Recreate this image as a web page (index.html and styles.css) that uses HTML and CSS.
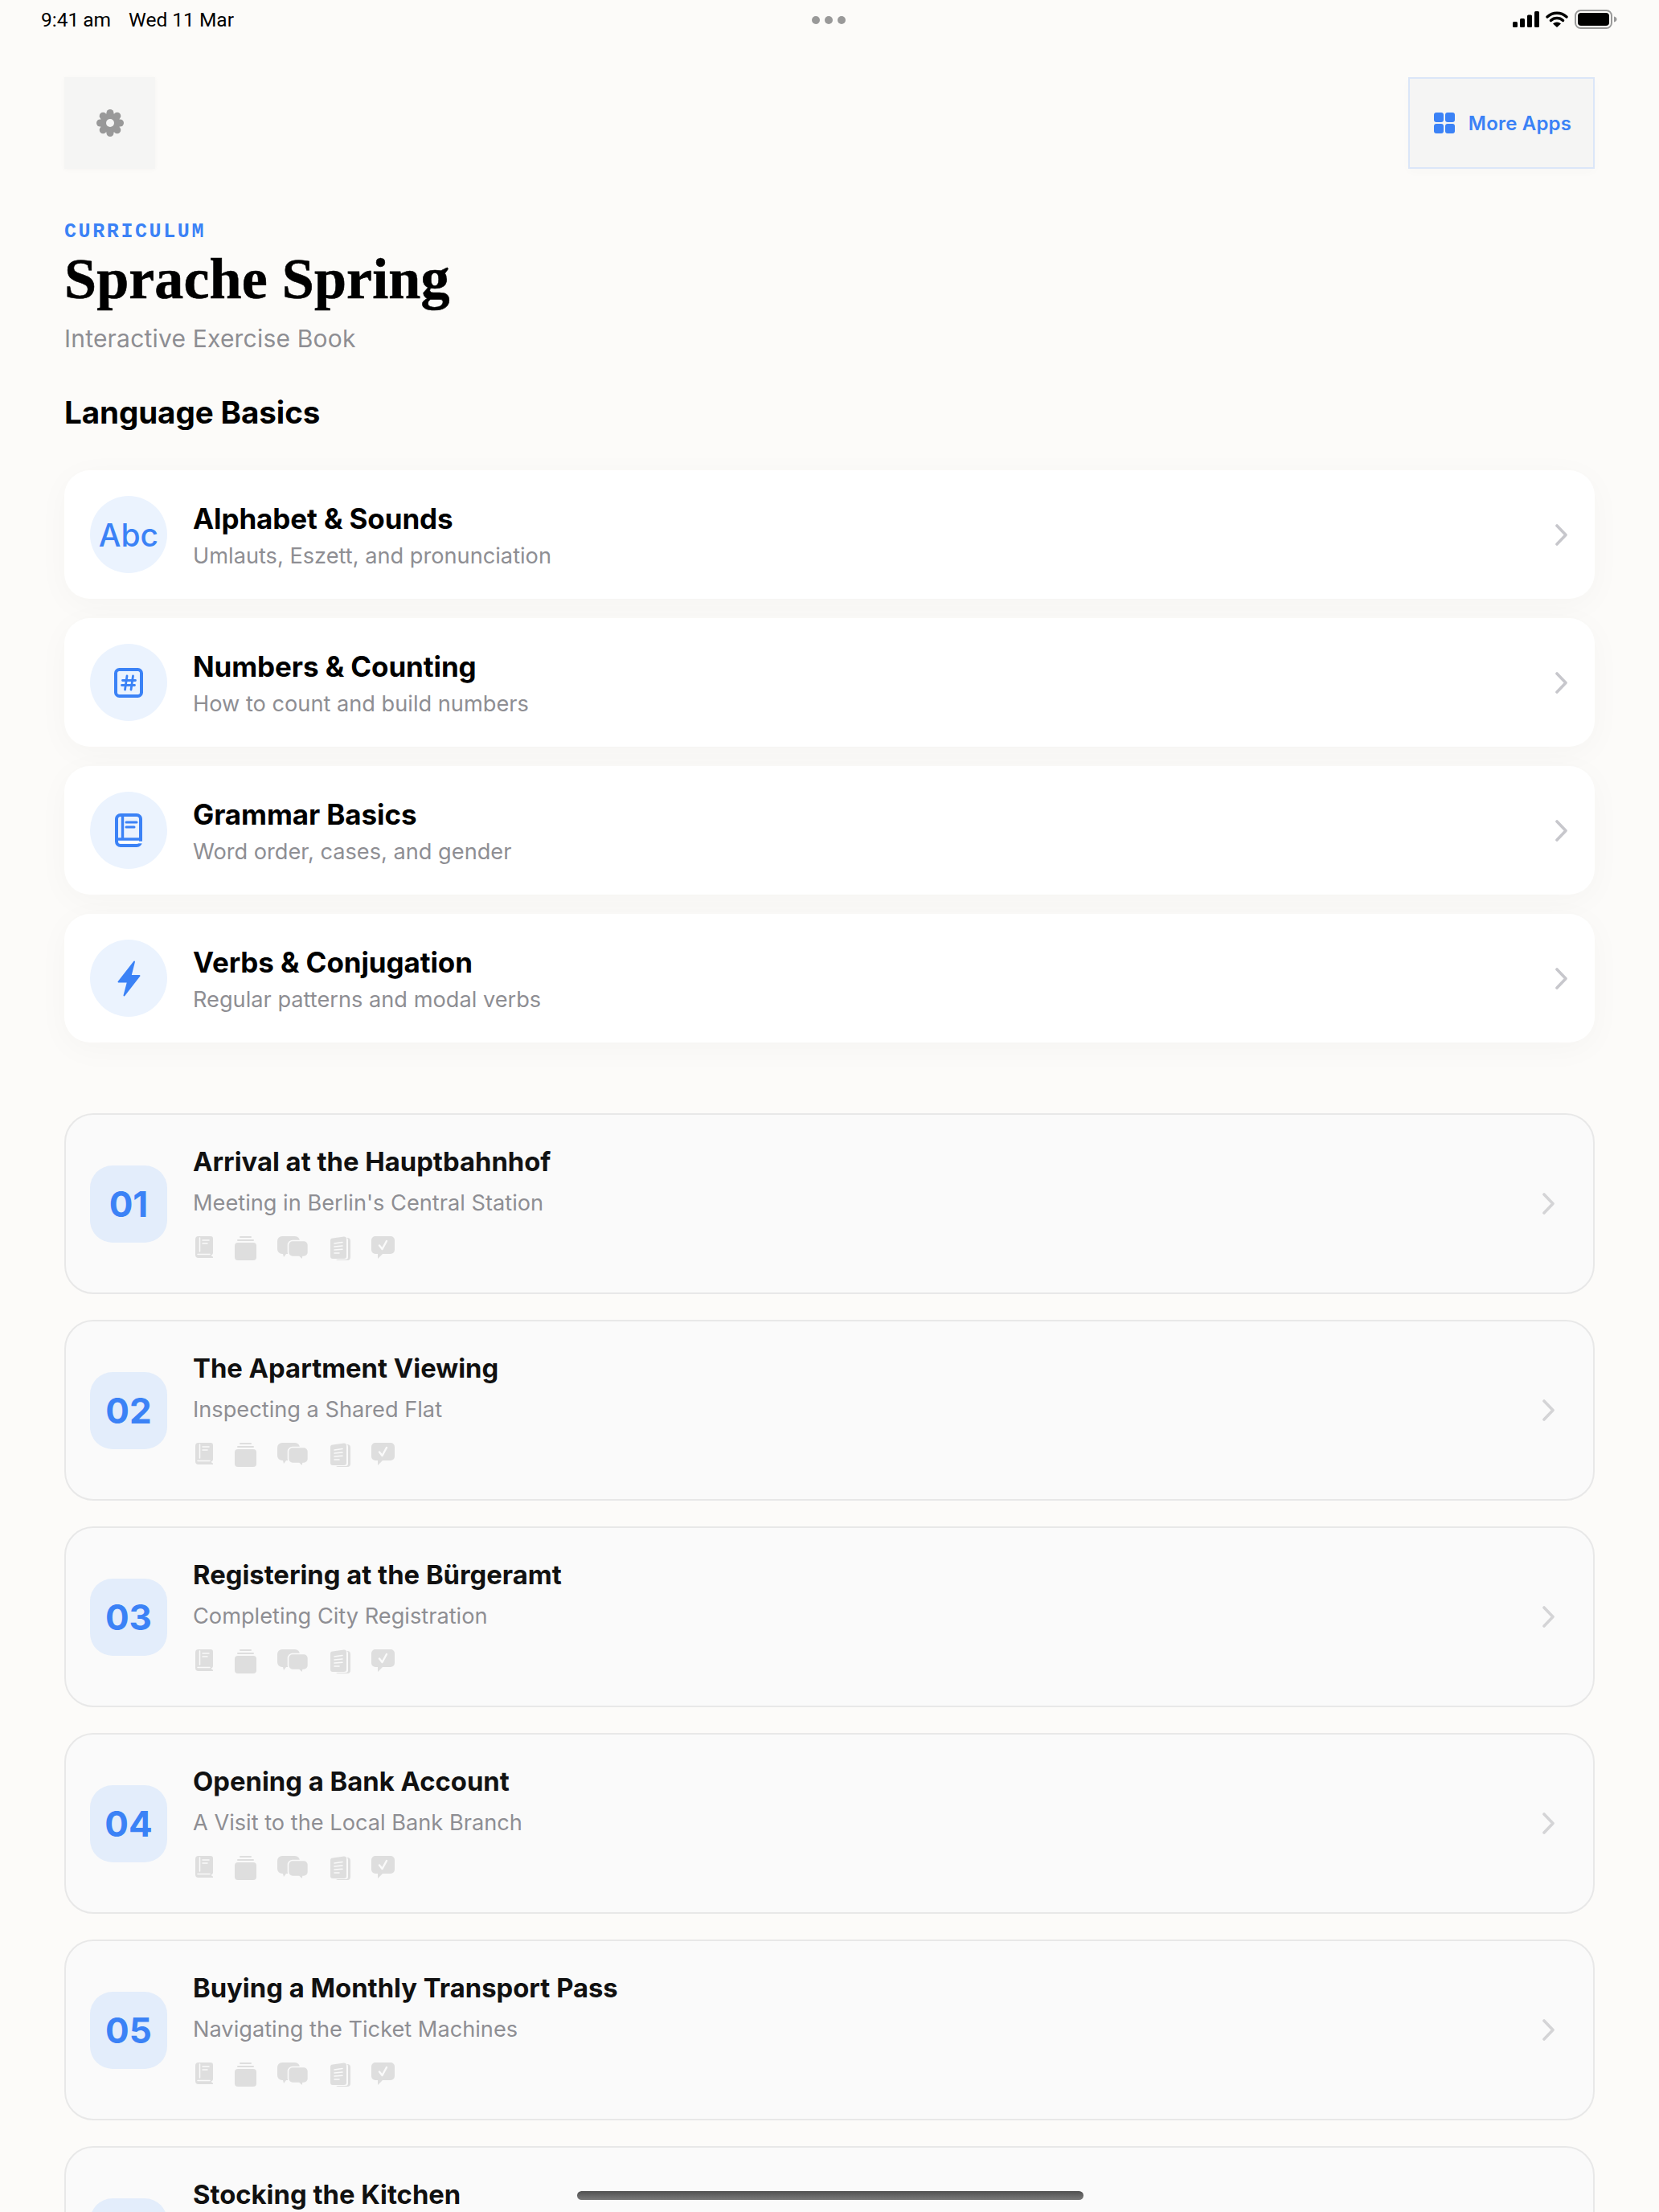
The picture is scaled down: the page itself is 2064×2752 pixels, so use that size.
FILE: index.html
```html
<!DOCTYPE html>
<html lang="en">
  <head>
    <meta charset="UTF-8" />
    <meta name="viewport" content="width=device-width, initial-scale=1.0" />
    <title>Sprache Spring</title>
    <link rel="stylesheet" href="styles.css">
  </head>
  <body>
    <svg class="sprites" aria-hidden="true">
      <symbol id="chevron" viewBox="0 0 15 27">
        <path d="M2 2l11 11.5L2 25" fill="none" stroke="currentColor" stroke-width="3.6" stroke-linecap="round" stroke-linejoin="round" />
      </symbol>
      <symbol id="mini-book" viewBox="0 0 22 27">
        <path d="M4 0h15a3 3 0 0 1 3 3v18a3 3 0 0 1-2 2.4c0 .8.6 1.6 2 2.1V27H4a4 4 0 0 1-4-4V4a4 4 0 0 1 4-4z" fill="currentColor" />
        <path d="M5.5 2v17M9 5h8M9 9h6M3 22.5h15" fill="none" stroke="#fafafa" stroke-width="1.5" stroke-linecap="round" />
      </symbol>
      <symbol id="mini-stack" viewBox="0 0 27 30">
        <rect x="0" y="8" width="27" height="22" rx="4" fill="currentColor" />
        <rect x="3" y="4" width="21" height="2" rx="1" fill="currentColor" />
        <rect x="6" y="0" width="15" height="2" rx="1" fill="currentColor" />
      </symbol>
      <symbol id="mini-chat" viewBox="0 0 39 30">
        <path d="M6 0h16a6 6 0 0 1 6 6v10a6 6 0 0 1-6 6H11l-3 4-1-4H6a6 6 0 0 1-6-6V6a6 6 0 0 1 6-6z" fill="currentColor" />
        <path d="M19 5.500h14a5.500 5.500 0 0 1 5.500 5.500v9a5.500 5.500 0 0 1-5.500 5.500h-1l-1 4-4-4h-8a5.500 5.500 0 0 1-5.500-5.500v-9a5.500 5.500 0 0 1 5.500-5.500z" fill="currentColor" stroke="#fafafa" stroke-width="1.600" />
      </symbol>
      <symbol id="mini-doc" viewBox="0 0 25 30">
        <path d="M19 2h2a4 4 0 0 1 4 4v20a4 4 0 0 1-4 4H9l-2-1h12a3 3 0 0 0 3-3V5a3 3 0 0 0-3-3z" fill="currentColor" />
        <path d="M3 2.500L17 .5a3 3 0 0 1 3 3V25a3 3 0 0 1-3 3H3a3 3 0 0 1-3-3V5.500a3 3 0 0 1 3-3z" fill="currentColor" />
        <path d="M5 9l10-1.500M5 13l10-1M5 17l10-.7M5 21h6" fill="none" stroke="#fafafa" stroke-width="1.500" stroke-linecap="round" />
      </symbol>
      <symbol id="mini-check" viewBox="0 0 29 28">
        <path d="M5 0h19a5 5 0 0 1 5 5v12a5 5 0 0 1-5 5H14l-6 6v-6H5a5 5 0 0 1-5-5V5a5 5 0 0 1 5-5z" fill="currentColor" />
        <path d="M10 11.500l3.500 4.500 5.500-10" fill="none" stroke="#fafafa" stroke-width="2.400" stroke-linecap="round" stroke-linejoin="round" />
      </symbol>
    </svg>

    <div class="status-bar">
      <div class="status-time">
        <span>9:41&thinsp;am</span>
        <span>Wed 11 Mar</span>
      </div>
      <div class="status-dots"><i></i><i></i><i></i></div>
      <div class="status-icons">
        <svg class="signal" viewBox="0 0 33 20">
          <rect x="0" y="13" width="6" height="7" rx="1.500" />
          <rect x="9" y="9" width="6" height="11" rx="1.500" />
          <rect x="18" y="4.500" width="6" height="15.500" rx="1.500" />
          <rect x="27" y="0" width="6" height="20" rx="1.500" />
        </svg>
        <svg class="wifi" viewBox="0 0 28 20">
          <path d="M2 7a17.500 17.500 0 0 1 24 0M6.500 11.500a11 11 0 0 1 15 0" fill="none" stroke="#000" stroke-width="3.400" stroke-linecap="round" />
          <path d="M14 20l-5-4.600a7.500 7.500 0 0 1 10 0z" />
        </svg>
        <svg class="battery" viewBox="0 0 53 24">
          <rect x="1" y="1" width="45" height="22" rx="6.500" fill="none" stroke="#999" stroke-width="2" />
          <rect x="4" y="4" width="39" height="16" rx="4" />
          <path d="M49 8.500c2 .4 3.500 1.700 3.500 3.500s-1.500 3.100-3.500 3.500z" fill="#999" />
        </svg>
      </div>
    </div>

    <main class="page">
      <div class="top-bar">
        <button class="settings-btn">
          <svg class="gear" viewBox="0 0 34 34">
            <g fill="#999">
              <circle cx="17" cy="17" r="12.500" />
              <circle cx="17" cy="4.500" r="4.500" />
              <circle cx="17" cy="29.500" r="4.500" />
              <circle cx="4.500" cy="17" r="4.500" />
              <circle cx="29.500" cy="17" r="4.500" />
              <circle cx="8.200" cy="8.200" r="4.500" />
              <circle cx="25.800" cy="8.200" r="4.500" />
              <circle cx="8.200" cy="25.800" r="4.500" />
              <circle cx="25.800" cy="25.800" r="4.500" />
            </g>
            <circle cx="17" cy="17" r="5" fill="#f5f5f4" />
          </svg>
        </button>
        <button class="apps-btn">
          <svg class="grid" viewBox="0 0 26 26">
            <rect x="0" y="0" width="12" height="12" rx="3" />
            <rect x="14" y="0" width="12" height="12" rx="3" />
            <rect x="0" y="14" width="12" height="12" rx="3" />
            <rect x="14" y="14" width="12" height="12" rx="3" />
          </svg>
          More Apps
        </button>
      </div>

      <header class="hero">
        <div class="eyebrow">CURRICULUM</div>
        <h1>Sprache Spring</h1>
        <p>Interactive Exercise Book</p>
      </header>

      <h2>Language Basics</h2>

      <section class="basics">
        <a class="basic-card">
          <span class="basic-icon abc">Abc</span>
          <span class="basic-text">
            <b>Alphabet &amp; Sounds</b>
            <small>Umlauts, Eszett, and pronunciation</small>
          </span>
          <svg class="chevron"><use href="#chevron" /></svg>
        </a>
        <a class="basic-card">
          <span class="basic-icon">
            <svg class="icon-hash" viewBox="0 0 36 37">
              <rect x="2" y="2" width="32" height="33" rx="4.500" fill="none" stroke="currentColor" stroke-width="4" />
              <path d="M16 10l-2.500 17M23.500 10L21 27M10.500 15.500h16M9.500 21.500h16" fill="none" stroke="currentColor" stroke-width="2.800" stroke-linecap="round" />
            </svg>
          </span>
          <span class="basic-text">
            <b>Numbers &amp; Counting</b>
            <small>How to count and build numbers</small>
          </span>
          <svg class="chevron"><use href="#chevron" /></svg>
        </a>
        <a class="basic-card">
          <span class="basic-icon">
            <svg class="icon-book" viewBox="0 0 34 42">
              <rect x="2" y="2" width="30" height="38" rx="5" fill="none" stroke="currentColor" stroke-width="4" />
              <path d="M9.500 3v29M3 32h28" fill="none" stroke="currentColor" stroke-width="3.400" />
              <path d="M14 11h13M14 17h10" fill="none" stroke="currentColor" stroke-width="3" stroke-linecap="round" />
              <path d="M6 36h28" fill="none" stroke="#fff" stroke-width="2.600" />
            </svg>
          </span>
          <span class="basic-text">
            <b>Grammar Basics</b>
            <small>Word order, cases, and gender</small>
          </span>
          <svg class="chevron"><use href="#chevron" /></svg>
        </a>
        <a class="basic-card">
          <span class="basic-icon">
            <svg class="icon-bolt" viewBox="0 0 29 45">
              <path d="M21 1.500L1.500 26.500H13l-4.500 17L27.500 19H16.500z" fill="currentColor" stroke="currentColor" stroke-width="2" stroke-linejoin="round" />
            </svg>
          </span>
          <span class="basic-text">
            <b>Verbs &amp; Conjugation</b>
            <small>Regular patterns and modal verbs</small>
          </span>
          <svg class="chevron"><use href="#chevron" /></svg>
        </a>
      </section>

      <section class="lessons">
        <a class="lesson-card">
          <span class="lesson-num">01</span>
          <span class="lesson-text">
            <b>Arrival at the Hauptbahnhof</b>
            <small>Meeting in Berlin's Central Station</small>
            <span class="lesson-icons">
              <svg class="mi-book"><use href="#mini-book" /></svg>
              <svg class="mi-stack"><use href="#mini-stack" /></svg>
              <svg class="mi-chat"><use href="#mini-chat" /></svg>
              <svg class="mi-doc"><use href="#mini-doc" /></svg>
              <svg class="mi-check"><use href="#mini-check" /></svg>
            </span>
          </span>
          <svg class="chevron"><use href="#chevron" /></svg>
        </a>
        <a class="lesson-card">
          <span class="lesson-num">02</span>
          <span class="lesson-text">
            <b>The Apartment Viewing</b>
            <small>Inspecting a Shared Flat</small>
            <span class="lesson-icons">
              <svg class="mi-book"><use href="#mini-book" /></svg>
              <svg class="mi-stack"><use href="#mini-stack" /></svg>
              <svg class="mi-chat"><use href="#mini-chat" /></svg>
              <svg class="mi-doc"><use href="#mini-doc" /></svg>
              <svg class="mi-check"><use href="#mini-check" /></svg>
            </span>
          </span>
          <svg class="chevron"><use href="#chevron" /></svg>
        </a>
        <a class="lesson-card">
          <span class="lesson-num">03</span>
          <span class="lesson-text">
            <b>Registering at the Bürgeramt</b>
            <small>Completing City Registration</small>
            <span class="lesson-icons">
              <svg class="mi-book"><use href="#mini-book" /></svg>
              <svg class="mi-stack"><use href="#mini-stack" /></svg>
              <svg class="mi-chat"><use href="#mini-chat" /></svg>
              <svg class="mi-doc"><use href="#mini-doc" /></svg>
              <svg class="mi-check"><use href="#mini-check" /></svg>
            </span>
          </span>
          <svg class="chevron"><use href="#chevron" /></svg>
        </a>
        <a class="lesson-card">
          <span class="lesson-num">04</span>
          <span class="lesson-text">
            <b>Opening a Bank Account</b>
            <small>A Visit to the Local Bank Branch</small>
            <span class="lesson-icons">
              <svg class="mi-book"><use href="#mini-book" /></svg>
              <svg class="mi-stack"><use href="#mini-stack" /></svg>
              <svg class="mi-chat"><use href="#mini-chat" /></svg>
              <svg class="mi-doc"><use href="#mini-doc" /></svg>
              <svg class="mi-check"><use href="#mini-check" /></svg>
            </span>
          </span>
          <svg class="chevron"><use href="#chevron" /></svg>
        </a>
        <a class="lesson-card">
          <span class="lesson-num">05</span>
          <span class="lesson-text">
            <b>Buying a Monthly Transport Pass</b>
            <small>Navigating the Ticket Machines</small>
            <span class="lesson-icons">
              <svg class="mi-book"><use href="#mini-book" /></svg>
              <svg class="mi-stack"><use href="#mini-stack" /></svg>
              <svg class="mi-chat"><use href="#mini-chat" /></svg>
              <svg class="mi-doc"><use href="#mini-doc" /></svg>
              <svg class="mi-check"><use href="#mini-check" /></svg>
            </span>
          </span>
          <svg class="chevron"><use href="#chevron" /></svg>
        </a>
        <a class="lesson-card">
          <span class="lesson-num"></span>
          <span class="lesson-text">
            <b>Stocking the Kitchen</b>
            <small>&nbsp;</small>
            <span class="lesson-icons">
              <svg class="mi-stack"><use href="#mini-stack" /></svg>
            </span>
          </span>
          <svg class="chevron"><use href="#chevron" /></svg>
        </a>
      </section>
    </main>

    <div class="home-bar"></div>
  </body>
</html>
```

FILE: styles.css
```css
* {
  box-sizing: border-box;
}

html,
body {
  margin: 0;
  height: 2752px;
  overflow: hidden;
}

body {
  position: relative;
  background-color: #fcfbf9;
  color: #000;
  font-family: Inter, "Noto Sans", sans-serif;
}

.sprites {
  display: none;
}

/* status bar */
.status-bar {
  position: relative;
  display: flex;
  justify-content: space-between;
  align-items: center;
  height: 48px;
  padding: 0 52px 0 51px;
}

.status-time {
  display: flex;
  gap: 22px;
  font-family: Roboto, sans-serif;
  font-size: 24.5px;
}

.status-dots {
  position: absolute;
  left: 1010px;
  top: 20px;
  display: flex;
  gap: 6px;
}

.status-dots i {
  width: 10px;
  height: 10px;
  border-radius: 50%;
  background-color: #999;
}

.status-icons {
  display: flex;
  align-items: center;
  gap: 8px;
}

.signal {
  width: 33px;
  height: 20px;
}

.wifi {
  width: 28px;
  height: 20px;
}

.battery {
  width: 53px;
  height: 24px;
}

/* page */
.page {
  padding: 48px 80px 0;
}

.top-bar {
  display: flex;
  justify-content: space-between;
}

.top-bar button {
  display: flex;
  align-items: center;
  justify-content: center;
  height: 114px;
  background-color: #f5f5f4;
  border: 0;
  padding: 0;
  font-family: inherit;
}

.settings-btn {
  width: 113px;
  box-shadow: 0 1px 6px rgba(0, 0, 0, 0.03);
}

.gear {
  width: 34px;
  height: 34px;
}

.top-bar .apps-btn {
  width: 232px;
  gap: 17px;
  padding-left: 3px;
  border: 2px solid #dbe6f8;
  box-shadow: 0 4px 12px rgba(0, 0, 0, 0.02);
  color: #3b82f6;
  font-size: 24px;
  font-weight: 600;
  letter-spacing: 0.2px;
}

.grid {
  width: 26px;
  height: 26px;
  fill: #3b82f6;
}

.hero {
  margin-top: 65px;
}

.eyebrow {
  color: #3b82f6;
  font-family: "Liberation Mono", monospace;
  font-size: 25px;
  font-weight: 700;
  line-height: 28px;
  letter-spacing: 2.6px;
}

h1 {
  margin: 6px 0 0;
  font-family: "Liberation Serif", serif;
  font-size: 72px;
  font-weight: 700;
  line-height: 76px;
  letter-spacing: 0.1px;
  -webkit-text-stroke: 0.6px #000;
}

.hero p {
  margin: 16px 0 0;
  color: #8e8e93;
  font-size: 30px;
  letter-spacing: 0.2px;
  line-height: 40px;
}

h2 {
  margin: 48px 0 0;
  font-size: 38.6px;
  font-weight: 650;
  letter-spacing: -0.1px;
  line-height: 48px;
}

/* language basics */
.basics {
  display: flex;
  flex-direction: column;
  gap: 24px;
  margin-top: 48px;
}

.basic-card {
  display: flex;
  align-items: center;
  height: 160px;
  padding: 0 34px 0 32px;
  border-radius: 32px;
  background-color: #fff;
  box-shadow: 0 8px 40px rgba(0, 0, 0, 0.03);
}

.basic-icon {
  display: flex;
  align-items: center;
  justify-content: center;
  flex: none;
  width: 96px;
  height: 96px;
  border-radius: 50%;
  background-color: #ebf3fe;
  color: #3b82f6;
}

.abc {
  font-size: 39px;
  font-weight: 550;
}

.icon-hash {
  width: 36px;
  height: 37px;
}

.icon-book {
  width: 34px;
  height: 42px;
}

.icon-bolt {
  width: 29px;
  height: 45px;
}

.basic-text {
  display: flex;
  flex-direction: column;
  flex: 1;
  margin-left: 32px;
  padding-top: 3px;
}

.basic-text b {
  font-size: 35px;
  font-weight: 650;
  letter-spacing: -0.1px;
  line-height: 44px;
}

.basic-text small {
  margin-top: 7px;
  color: #8e8e93;
  font-size: 27.2px;
  line-height: 36px;
}

.chevron {
  flex: none;
  width: 15px;
  height: 27px;
  color: #c7c7cc;
}

/* lessons */
.lessons {
  display: flex;
  flex-direction: column;
  gap: 32px;
  margin-top: 88px;
}

.lesson-card {
  display: flex;
  align-items: center;
  flex: none;
  height: 225px;
  padding: 0 48px 0 30px;
  border: 2px solid #e8e8e8;
  border-radius: 36px;
  background-color: #fafafa;
}

.lesson-num {
  display: flex;
  align-items: center;
  justify-content: center;
  flex: none;
  width: 96px;
  height: 96px;
  border-radius: 28px;
  background-color: #e3edfb;
  color: #3b82f6;
  font-size: 44px;
  font-weight: 650;
}

.lesson-text {
  display: flex;
  flex-direction: column;
  flex: 1;
  margin-left: 32px;
  padding-bottom: 5px;
}

.lesson-text b {
  font-size: 32.8px;
  font-weight: 650;
  line-height: 44px;
  color: #111;
}

.lesson-text small {
  margin-top: 12px;
  color: #8e8e93;
  font-size: 27.2px;
  line-height: 36px;
}

.lesson-icons {
  display: flex;
  align-items: flex-start;
  gap: 26.5px;
  margin-top: 23px;
  margin-left: 3px;
  color: #dedede;
}

.mi-book {
  width: 22px;
  height: 27px;
}

.mi-stack {
  width: 27px;
  height: 30px;
}

.mi-chat {
  width: 39px;
  height: 30px;
}

.mi-doc {
  width: 25px;
  height: 30px;
}

.mi-check {
  width: 29px;
  height: 28px;
}

.lesson-card .chevron {
  color: #d4d4d6;
}

.home-bar {
  position: absolute;
  left: 718px;
  top: 2726px;
  width: 630px;
  height: 11px;
  border-radius: 6px;
  background: linear-gradient(180deg, #505050, #7a7a7a);
}
```
